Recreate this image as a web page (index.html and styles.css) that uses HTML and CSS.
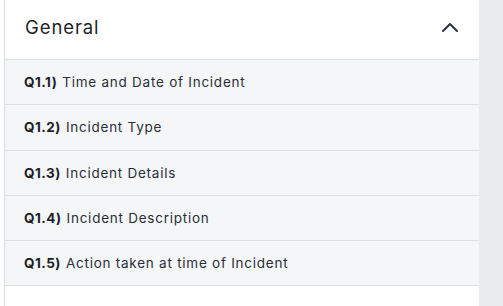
FILE: index.html
```html
<!DOCTYPE html>
<html lang="en">
<head>
  <meta charset="UTF-8" />
  <title>General</title>
  <link rel="stylesheet" href="styles.css">
</head>
<body>
  <div class="page">
    <!-- Sección General -->
    <section class="panel">
      <div class="panel-header">
        <span class="panel-title">General</span>
        <svg class="chevron" width="18" height="12" viewBox="0 0 18 12">
          <path d="M2 10 L9 3 L16 10" fill="none" stroke="#2b3340" stroke-width="2" stroke-linecap="round" stroke-linejoin="round"/>
        </svg>
      </div>
      <div class="question"><b>Q1.1)</b> Time and Date of Incident</div>
      <div class="question"><b>Q1.2)</b> Incident Type</div>
      <div class="question"><b>Q1.3)</b> Incident Details</div>
      <div class="question"><b>Q1.4)</b> Incident Description</div>
      <div class="question"><b>Q1.5)</b> Action taken at time of Incident</div>
    </section>
    <div class="side"></div>
  </div>
</body>
</html>
```

FILE: styles.css
```css
html, body {
  margin: 0;
  padding: 0;
  height: 100%;
}
body {
  font-family: 'Inter', sans-serif;
  background: #fff;
  color: #1f2430;
}
.page {
  display: flex;
  height: 100%;
  padding-left: 4px;
}
.panel {
  width: 474px;
  border-left: 1px solid #d8dde6;
  background: #fff;
}
.side {
  flex: 1;
  background: #e9ecef;
}
.panel-header {
  height: 60px;
  display: flex;
  align-items: center;
  justify-content: space-between;
  padding: 0 20px 6px 20px;
  border-bottom: 1px solid #dcdfe4;
  box-sizing: border-box;
}
.panel-title {
  font-size: 18.5px;
  color: #1c1f26;
  letter-spacing: 0.9px;
}
.chevron {
  display: block;
}
.question {
  display: flex;
  align-items: center;
  padding-left: 19px;
  background: #f5f6f8;
  border-bottom: 1px solid #dcdfe4;
  font-size: 13.5px;
  letter-spacing: 0.75px;
  color: #2a2e38;
  box-sizing: border-box;
  height: 45.3px;
}
.question b {
  font-weight: 700;
  letter-spacing: 0.5px;
  margin-right: 5px;
  color: #1c1f26;
}
```
